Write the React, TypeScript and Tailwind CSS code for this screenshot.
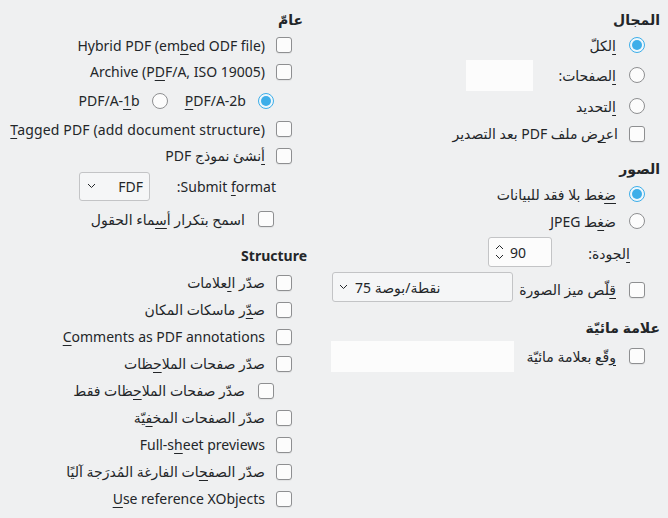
import React from 'react';

function Check() {
  return <span className="block w-4 h-4 shrink-0 rounded-[3px] border border-[#8e8f91] bg-[#fcfcfc] shadow-[0_1px_1px_rgba(0,0,0,0.06)]" />;
}

function Radio({ on }: { on?: boolean }) {
  if (on) {
    return (
      <span className="flex w-4 h-4 shrink-0 items-center justify-center rounded-full border border-[#3daee9] bg-[#eef7fc]">
        <span className="block w-[10px] h-[10px] rounded-full bg-[#3daee9]" />
      </span>
    );
  }
  return <span className="block w-4 h-4 shrink-0 rounded-full border border-[#8e8f91] bg-[#fcfcfc]" />;
}

function U({ children }: { children: React.ReactNode }) {
  return <span className="underline decoration-1 underline-offset-[3px]">{children}</span>;
}

function Heading({ children, className }: { children: React.ReactNode; className: string }) {
  return <div className={'flex items-center font-bold ' + className}>{children}</div>;
}

function Chevron() {
  return (
    <svg width="9" height="6" viewBox="0 0 9 6" className="shrink-0">
      <path d="M1 1 L4.5 4.5 L8 1" fill="none" stroke="#232629" strokeWidth="1" />
    </svg>
  );
}

function CheckRow({ label, h = 'h-[27px]', pr = 'pr-[12px]' }: { label: React.ReactNode; h?: string; pr?: string }) {
  return (
    <div className={'flex items-center gap-[11px] whitespace-nowrap ' + h + ' ' + pr}>
      <Check />
      <span>{label}</span>
    </div>
  );
}

export default function App() {
  return (
    <div
      dir="rtl"
      className="flex w-[668px] h-[518px] overflow-hidden whitespace-nowrap bg-[#eff0f1] text-[#232629] text-[14px] font-['Noto_Sans','DejaVu_Sans',sans-serif]"
    >
      {/* right column */}
      <div className="flex w-[356px] shrink-0 flex-col pr-[8px]">
        <Heading className="mt-[6px] h-[26px]">المجال</Heading>
        <div className="flex h-[26px] items-center gap-[13px] pr-[15px]">
          <Radio on />
          <span><U>ا</U>لكلّ</span>
        </div>
        <div className="flex h-[34px] items-center pr-[15px]">
          <Radio />
          <span className="mr-[13px] w-[83px]"><U>ا</U>لصفحات:</span>
          <span className="block w-[67px] h-[31px] bg-[#fcfcfc]" />
        </div>
        <div className="flex h-[28px] items-center gap-[13px] pr-[15px]">
          <Radio />
          <span><U>ا</U>لتحديد</span>
        </div>
        <CheckRow h="h-[27px]" pr="pr-[15px]" label={<span>اع<U>ر</U>ض ملف PDF بعد التصدير</span>} />

        <Heading className="mt-[8px] h-[26px]">الصور</Heading>
        <div className="flex h-[26px] items-center gap-[13px] pr-[15px]">
          <Radio on />
          <span><U>ض</U>غط بلا فقد للبيانات</span>
        </div>
        <div className="flex h-[28px] items-center gap-[13px] pr-[15px]">
          <Radio />
          <span>ض<U>غ</U>ط JPEG</span>
        </div>
        <div className="flex h-[34px] items-center pr-[30px]">
          <span className="w-[78px] pt-[3px]"><U>ا</U>لجودة:</span>
          <div dir="ltr" className="flex w-[64px] h-[30px] items-center gap-[6px] rounded-[3px] border border-[#c3c4c6] bg-[#fcfcfc] pl-[6px]">
            <svg width="9" height="18" viewBox="0 0 9 18">
              <path d="M1 6 L4.5 2.5 L8 6" fill="none" stroke="#232629" strokeWidth="1" />
              <path d="M1 12 L4.5 15.5 L8 12" fill="none" stroke="#232629" strokeWidth="1" />
            </svg>
            <span>90</span>
          </div>
        </div>
        <div className="flex h-[36px] items-center pr-[15px]">
          <div className="flex w-[132px] items-center gap-[13px] pt-[5px]">
            <Check />
            <span><U>ق</U>لّص ميز الصورة</span>
          </div>
          <div dir="ltr" className="flex w-[181px] h-[30px] items-center gap-[7px] rounded-[3px] border border-[#c3c4c6] bg-[#f5f6f7] pl-[6px]">
            <Chevron />
            <span>75 نقطة/بوصة</span>
          </div>
        </div>

        <Heading className="mt-[9px] h-[26px]">علامة مائيّة</Heading>
        <div className="flex h-[32px] items-center pr-[15px]">
          <div className="flex w-[131px] items-center gap-[13px]">
            <Check />
            <span><U>و</U>قّع بعلامة مائيّة</span>
          </div>
          <span className="block w-[183px] h-[31px] bg-[#fcfcfc]" />
        </div>
      </div>

      {/* left column */}
      <div className="flex w-[312px] shrink-0 flex-col pr-[9px]">
        <Heading className="mt-[6px] h-[26px]">عامّ</Heading>
        <CheckRow h="h-[26px]" pr="pr-[11px]" label={<span dir="ltr">Hybrid PDF (em<U>b</U>ed ODF file)</span>} />
        <CheckRow h="h-[27px]" pr="pr-[11px]" label={<span dir="ltr">Archive (P<U>D</U>F/A, ISO 19005)</span>} />
        <div className="flex h-[31px] items-center pr-[29px]">
          <Radio on />
          <span dir="ltr" className="mr-[12px]"><U>P</U>DF/A-2b</span>
          <span className="mr-[17px]"><Radio /></span>
          <span dir="ltr" className="mr-[12px]">PDF/A-<U>1</U>b</span>
        </div>
        <CheckRow h="h-[26px]" pr="pr-[11px]" label={<span dir="ltr" className="tracking-[0.15px]"><U>T</U>agged PDF (add document structure)</span>} />
        <CheckRow h="h-[27px]" pr="pr-[11px]" label={<span><U>أ</U>نشئ نموذج PDF</span>} />
        <div className="flex h-[34px] items-center pr-[27px]">
          <span className="w-[126px]">
            <span dir="ltr">:Submit <U>f</U>ormat</span>
          </span>
          <div className="flex w-[71px] h-[29px] items-center justify-between rounded-[3px] border border-[#c3c4c6] bg-[#f5f6f7] pl-[7px] pr-[6px]">
            <span>FDF</span>
            <Chevron />
          </div>
        </div>
        <div className="flex h-[32px] items-center gap-[13px] pr-[29px]">
          <Check />
          <span>اسمح بتكرار أ<U>س</U>ماء الحقول</span>
        </div>

        <Heading className="mt-[7px] h-[27px]">
          <span dir="ltr" className="-mr-[4px]">Structure</span>
        </Heading>
        <CheckRow pr="pr-[11px]" label={<span>صدّر ا<U>ل</U>علامات</span>} />
        <CheckRow pr="pr-[11px]" label={<span>ص<U>دّ</U>ر ماسكات المكان</span>} />
        <CheckRow pr="pr-[11px]" label={<span dir="ltr"><U>C</U>omments as PDF annotations</span>} />
        <CheckRow pr="pr-[11px]" label={<span>صدّر صفحات الملا<U>ح</U>ظات</span>} />
        <div className="flex h-[27px] items-center gap-[13px] pr-[29px]">
          <Check />
          <span>صدّر صفحات الملا<U>ح</U>ظات فقط</span>
        </div>
        <CheckRow pr="pr-[11px]" label={<span>صدّر الصفحات المخ<U>ف</U>يّة</span>} />
        <CheckRow pr="pr-[11px]" label={<span dir="ltr">Full-s<U>h</U>eet previews</span>} />
        <CheckRow pr="pr-[11px]" label={<span>صدّر الصف<U>ح</U>ات الفارغة المُدرَجة آليًا</span>} />
        <CheckRow pr="pr-[11px]" label={<span dir="ltr"><U>U</U>se reference XObjects</span>} />
      </div>
    </div>
  );
}
